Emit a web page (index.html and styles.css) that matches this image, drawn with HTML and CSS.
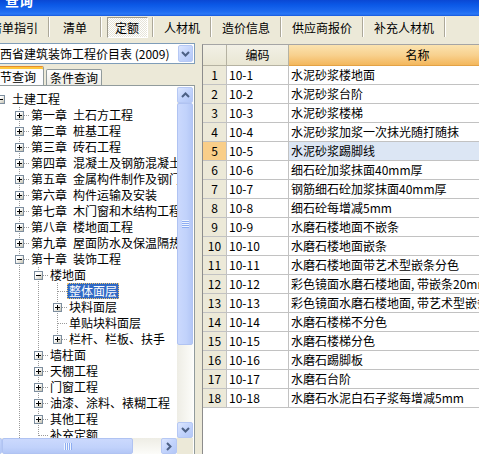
FILE: index.html
```html
<!DOCTYPE html>
<html lang="zh-CN">
<head>
<meta charset="utf-8">
<title>查询</title>
<link rel="stylesheet" href="styles.css">
</head>
<body>
<div class="titlebar"><span class="title">查询</span></div>
<div class="toolbar">
  <div class="tb-item">清单指引</div><i class="tb-sep"></i>
  <div class="tb-item">清单</div><i class="tb-sep"></i>
  <div class="tb-item active"><span class="tb-box">定额</span></div><i class="tb-sep"></i>
  <div class="tb-item">人材机</div><i class="tb-sep"></i>
  <div class="tb-item">造价信息</div><i class="tb-sep"></i>
  <div class="tb-item">供应商报价</div><i class="tb-sep"></i>
  <div class="tb-item">补充人材机</div><i class="tb-sep"></i>
</div>
<div class="main">
  <div class="left">
    <div class="combo">
      <span class="combo-text">广西省建筑装饰工程价目表 (2009)</span>
      <span class="sb-btn combo-btn"><svg width="9" height="6" viewBox="0 0 9 6"><path d="M1 1l3.5 3.5L8 1" fill="none" stroke="#4D6185" stroke-width="2"/></svg></span>
    </div>
    <div class="qtabs">
      <div class="qtab active">章节查询</div>
      <div class="qtab">条件查询</div>
    </div>
    <div class="treepanel">
      <div class="tree">
        <div class="row"><i class="c"><b class="bx minus"></b></i><span class="lbl">土建工程</span></div>
        <div class="row"><i class="g"></i><i class="c ct"><b class="bx plus"></b></i><span class="lbl">第一章&ensp;土石方工程</span></div>
        <div class="row"><i class="g"></i><i class="c ct"><b class="bx plus"></b></i><span class="lbl">第二章&ensp;桩基工程</span></div>
        <div class="row"><i class="g"></i><i class="c ct"><b class="bx plus"></b></i><span class="lbl">第三章&ensp;砖石工程</span></div>
        <div class="row"><i class="g"></i><i class="c ct"><b class="bx plus"></b></i><span class="lbl">第四章&ensp;混凝土及钢筋混凝土工程</span></div>
        <div class="row"><i class="g"></i><i class="c ct"><b class="bx plus"></b></i><span class="lbl">第五章&ensp;金属构件制作及钢门窗工程</span></div>
        <div class="row"><i class="g"></i><i class="c ct"><b class="bx plus"></b></i><span class="lbl">第六章&ensp;构件运输及安装</span></div>
        <div class="row"><i class="g"></i><i class="c ct"><b class="bx plus"></b></i><span class="lbl">第七章&ensp;木门窗和木结构工程</span></div>
        <div class="row"><i class="g"></i><i class="c ct"><b class="bx plus"></b></i><span class="lbl">第八章&ensp;楼地面工程</span></div>
        <div class="row"><i class="g"></i><i class="c ct"><b class="bx plus"></b></i><span class="lbl">第九章&ensp;屋面防水及保温隔热工程</span></div>
        <div class="row"><i class="g"></i><i class="c ct"><b class="bx minus"></b></i><span class="lbl">第十章&ensp;装饰工程</span></div>
        <div class="row"><i class="g"></i><i class="gv"></i><i class="c ct"><b class="bx minus"></b></i><span class="lbl">楼地面</span></div>
        <div class="row"><i class="g"></i><i class="gv"></i><i class="gv"></i><i class="c ct"></i><span class="lbl sel">整体面层</span></div>
        <div class="row"><i class="g"></i><i class="gv"></i><i class="gv"></i><i class="c ct"><b class="bx plus"></b></i><span class="lbl">块料面层</span></div>
        <div class="row"><i class="g"></i><i class="gv"></i><i class="gv"></i><i class="c ct"></i><span class="lbl">单贴块料面层</span></div>
        <div class="row"><i class="g"></i><i class="gv"></i><i class="gv"></i><i class="c cl"><b class="bx plus"></b></i><span class="lbl">栏杆、栏板、扶手</span></div>
        <div class="row"><i class="g"></i><i class="gv"></i><i class="c ct"><b class="bx plus"></b></i><span class="lbl">墙柱面</span></div>
        <div class="row"><i class="g"></i><i class="gv"></i><i class="c ct"><b class="bx plus"></b></i><span class="lbl">天棚工程</span></div>
        <div class="row"><i class="g"></i><i class="gv"></i><i class="c ct"><b class="bx plus"></b></i><span class="lbl">门窗工程</span></div>
        <div class="row"><i class="g"></i><i class="gv"></i><i class="c ct"><b class="bx plus"></b></i><span class="lbl">油漆、涂料、裱糊工程</span></div>
        <div class="row"><i class="g"></i><i class="gv"></i><i class="c ct"><b class="bx plus"></b></i><span class="lbl">其他工程</span></div>
        <div class="row"><i class="g"></i><i class="gv"></i><i class="c cl"></i><span class="lbl">补充定额</span></div>
      </div>
      <div class="vscroll">
        <span class="sb-btn"><svg width="9" height="6" viewBox="0 0 9 6"><path d="M1 5l3.5-3.5L8 5" fill="none" stroke="#4D6185" stroke-width="2"/></svg></span>
        <span class="thumb thumb-v"><i class="grip-v"></i></span>
        <span class="track"></span>
        <span class="sb-btn"><svg width="9" height="6" viewBox="0 0 9 6"><path d="M1 1l3.5 3.5L8 1" fill="none" stroke="#4D6185" stroke-width="2"/></svg></span>
      </div>
      <div class="hscroll">
        <span class="sb-btn"><svg width="6" height="9" viewBox="0 0 6 9"><path d="M5 1L1.5 4.5L5 8" fill="none" stroke="#4D6185" stroke-width="2"/></svg></span>
        <span class="thumb thumb-h"><i class="grip-h"></i></span>
        <span class="track"></span>
        <span class="sb-btn"><svg width="6" height="9" viewBox="0 0 6 9"><path d="M1 1l3.5 3.5L1 8" fill="none" stroke="#4D6185" stroke-width="2"/></svg></span>
      </div>
      <div class="corner"></div>
    </div>
  </div>
  <div class="right">
    <div class="trow thead"><span class="hc"></span><span class="hc">编码</span><span class="hc hc-sort">名称</span></div>
    <div class="trow"><span class="rn">1</span><span class="cd">10-1</span><span class="nm">水泥砂浆楼地面</span></div>
    <div class="trow"><span class="rn">2</span><span class="cd">10-2</span><span class="nm">水泥砂浆台阶</span></div>
    <div class="trow"><span class="rn">3</span><span class="cd">10-3</span><span class="nm">水泥砂浆楼梯</span></div>
    <div class="trow"><span class="rn">4</span><span class="cd">10-4</span><span class="nm">水泥砂浆加浆一次抹光随打随抹</span></div>
    <div class="trow cur"><span class="rn">5</span><span class="cd">10-5</span><span class="nm">水泥砂浆踢脚线</span></div>
    <div class="trow"><span class="rn">6</span><span class="cd">10-6</span><span class="nm">细石砼加浆抹面40mm厚</span></div>
    <div class="trow"><span class="rn">7</span><span class="cd">10-7</span><span class="nm">钢筋细石砼加浆抹面40mm厚</span></div>
    <div class="trow"><span class="rn">8</span><span class="cd">10-8</span><span class="nm">细石砼每增减5mm</span></div>
    <div class="trow"><span class="rn">9</span><span class="cd">10-9</span><span class="nm">水磨石楼地面不嵌条</span></div>
    <div class="trow"><span class="rn">10</span><span class="cd">10-10</span><span class="nm">水磨石楼地面嵌条</span></div>
    <div class="trow"><span class="rn">11</span><span class="cd">10-11</span><span class="nm">水磨石楼地面带艺术型嵌条分色</span></div>
    <div class="trow"><span class="rn">12</span><span class="cd">10-12</span><span class="nm">彩色镜面水磨石楼地面, 带嵌条20mm厚</span></div>
    <div class="trow"><span class="rn">13</span><span class="cd">10-13</span><span class="nm">彩色镜面水磨石楼地面, 带艺术型嵌条分色</span></div>
    <div class="trow"><span class="rn">14</span><span class="cd">10-14</span><span class="nm">水磨石楼梯不分色</span></div>
    <div class="trow"><span class="rn">15</span><span class="cd">10-15</span><span class="nm">水磨石楼梯分色</span></div>
    <div class="trow"><span class="rn">16</span><span class="cd">10-16</span><span class="nm">水磨石踢脚板</span></div>
    <div class="trow"><span class="rn">17</span><span class="cd">10-17</span><span class="nm">水磨石台阶</span></div>
    <div class="trow"><span class="rn">18</span><span class="cd">10-18</span><span class="nm">水磨石水泥白石子浆每增减5mm</span></div>
  </div>
</div>
</body>
</html>
```
FILE: styles.css
```css
* { box-sizing: border-box; }
html, body { margin: 0; padding: 0; }
body {
  width: 479px;
  height: 454px;
  overflow: hidden;
  background: #ECE9D8;
  font-family: "Noto Sans CJK SC", "Noto Sans", sans-serif;
  font-size: 12px;
  line-height: 16px;
  color: #000;
}
i, b { display: block; font-style: normal; }

/* title bar */
.titlebar {
  height: 16px;
  overflow: hidden;
  background: linear-gradient(to bottom, #0A48D4 0%, #0B58E6 30%, #1D6AF0 70%, #2A78F6 88%, #1558DD 100%);
}
.title {
  display: block;
  margin: -10px 0 0 5px;
  font-size: 14px;
  line-height: 20px;
  font-weight: bold;
  color: #fff;
}

/* toolbar tabs */
.toolbar {
  display: flex;
  height: 26px;
  padding-top: 1px;
  margin-left: -20px;
}
.tb-item {
  flex: none;
  height: 21px;
  min-width: 50px;
  padding: 0 10px;
  display: flex;
  align-items: center;
  justify-content: center;
  white-space: nowrap;
}
.tb-item.active { padding: 0; }
.tb-box {
  width: 41px;
  height: 21px;
  display: flex;
  align-items: center;
  justify-content: center;
  border: 1px solid;
  border-color: #9D9A8C #FFFFFF #FFFFFF #9D9A8C;
  background: repeating-conic-gradient(#FFFFFF 0 25%, #E6E4D8 0 50%) 0 0 / 2px 2px;
}
.tb-sep {
  flex: none;
  width: 2px;
  height: 20px;
  border-left: 1px solid #ACA899;
  border-right: 1px solid #FFFFFF;
}

/* main area */
.main {
  display: flex;
  height: 412px;
}
.left {
  flex: none;
  width: 211px;
  margin-left: -16px;
  display: flex;
  flex-direction: column;
}
.combo {
  margin-top: 1px;
  height: 21px;
  border: 1px solid #7F9DB9;
  background: #fff;
  display: flex;
  align-items: center;
  padding: 0 1px 0 3px;
}
.combo-text {
  flex: 1;
  white-space: nowrap;
  overflow: hidden;
}
.combo-btn {
  width: 15px !important;
  height: 17px !important;
}

.qtabs {
  margin-top: 2px;
  height: 19px;
  display: flex;
  align-items: flex-end;
}
.qtab {
  height: 16px;
  margin-left: 2px;
  padding: 0 3px;
  border: 1px solid #919B9C;
  border-bottom: none;
  border-radius: 2px 2px 0 0;
  background: linear-gradient(to bottom, #FFFFFF, #ECEBE5);
  line-height: 15px;
  white-space: nowrap;
}
.qtab.active {
  height: 19px;
  margin-left: 0;
  width: 60px;
  padding: 0 3px;
  border-top: 1px solid #E68B2C;
  box-shadow: inset 0 2px 0 #FFC83C;
  background: #FCFCFE;
  line-height: 19px;
}

.treepanel {
  height: 369px;
  border: 1px solid #919B9C;
  border-bottom: none;
  padding: 1px;
  background: #fff;
  display: grid;
  grid-template-columns: 1fr 16px;
  grid-template-rows: 351px 16px;
}
.tree {
  overflow: hidden;
  padding: 4px 0 0 5px;
}
.row {
  display: flex;
  height: 16px;
  white-space: nowrap;
}
.g, .gv, .c {
  flex: none;
  width: 19px;
  height: 16px;
}
.gv {
  background: repeating-linear-gradient(to bottom, #9A9A9A 0 1px, transparent 1px 2px) 9px 0 / 1px 100% no-repeat;
}
.c { padding: 4px 0 0 5px; }
.ct {
  background:
    repeating-linear-gradient(to right, #9A9A9A 0 1px, transparent 1px 2px) 10px 8px / 9px 1px no-repeat,
    repeating-linear-gradient(to bottom, #9A9A9A 0 1px, transparent 1px 2px) 9px 0 / 1px 100% no-repeat;
}
.cl {
  background:
    repeating-linear-gradient(to right, #9A9A9A 0 1px, transparent 1px 2px) 10px 8px / 9px 1px no-repeat,
    repeating-linear-gradient(to bottom, #9A9A9A 0 1px, transparent 1px 2px) 9px 0 / 1px 9px no-repeat;
}
.bx {
  width: 9px;
  height: 9px;
  border: 1px solid #7C8D9E;
}
.plus {
  background:
    linear-gradient(#000, #000) center / 5px 1px no-repeat,
    linear-gradient(#000, #000) center / 1px 5px no-repeat,
    linear-gradient(135deg, #FFFFFF 35%, #C5C2B2);
}
.minus {
  background:
    linear-gradient(#000, #000) center / 5px 1px no-repeat,
    linear-gradient(135deg, #FFFFFF 35%, #C5C2B2);
}
.lbl {
  padding: 0 2px;
  line-height: 16px;
}
.lbl.sel {
  background: #316AC5;
  color: #fff;
  outline: 1px dotted #F3C56A;
  outline-offset: -1px;
}

/* scrollbars */
.vscroll {
  display: flex;
  flex-direction: column;
  background: linear-gradient(to right, #EEEDE5, #FCFCF9);
}
.hscroll {
  display: flex;
  background: linear-gradient(to bottom, #EEEDE5, #FCFCF9);
}
.corner { background: #ECE9D8; }
.sb-btn {
  flex: none;
  width: 16px;
  height: 16px;
  border: 1px solid #B6C8F4;
  border-radius: 2px;
  background: linear-gradient(135deg, #DCE6FE 0%, #C3D4FC 50%, #B3C7F7 100%);
  display: flex;
  align-items: center;
  justify-content: center;
}
.thumb {
  flex: none;
  border: 1px solid #B0C3F2;
  border-radius: 2px;
  display: flex;
  align-items: center;
  justify-content: center;
}
.thumb-v {
  height: 242px;
  background: linear-gradient(to right, #CBD9FD, #C1D2FB 60%, #B4C7F6);
}
.thumb-h {
  width: 131px;
  background: linear-gradient(to bottom, #CBD9FD, #C1D2FB 60%, #B4C7F6);
}
.grip-v {
  width: 7px;
  height: 8px;
  background: repeating-linear-gradient(to bottom, #EEF4FE 0 1px, #8DADF2 1px 2px);
}
.grip-h {
  width: 8px;
  height: 7px;
  background: repeating-linear-gradient(to right, #EEF4FE 0 1px, #8DADF2 1px 2px);
}
.track { flex: 1; }

/* right grid */
.right {
  flex: 1;
  margin-left: 7px;
  margin-top: 2px;
  border-top: 1px solid #A5A5A5;
  border-left: 1px solid #8C8C8C;
  background: #fff;
  overflow: hidden;
}
.trow {
  display: grid;
  grid-template-columns: 24px 62px 258px;
  height: 19px;
}
.trow > span {
  border-right: 1px solid #C2C2C2;
  border-bottom: 1px solid #C2C2C2;
  line-height: 18px;
  white-space: nowrap;
  overflow: hidden;
}
.thead { height: 21px; }
.thead > .hc {
  background: linear-gradient(to bottom, #F2F0E6, #E9E6D3);
  border-color: #B5B2A2;
  text-align: center;
  line-height: 20px;
}
.thead > .hc-sort {
  background: linear-gradient(to bottom, #FBE3AF 0%, #F8D18F 50%, #F3B75C 100%);
  border-bottom-color: #E3A246;
}
.rn {
  background: #ECE9D8;
  text-align: center;
}
.cd, .nm { padding-left: 2px; }
.cur .rn { background: #F9CE89; }
.cur .nm { background: #DCE6F4; }
```
